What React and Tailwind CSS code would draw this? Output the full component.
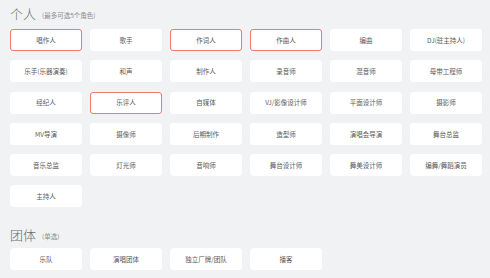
import React, { useState } from "react"

const ROLES = [
  "唱作人", "歌手", "作词人", "作曲人", "编曲", "DJ(驻主持人)",
  "乐手(乐器演奏)", "和声", "制作人", "录音师", "混音师", "母带工程师",
  "经纪人", "乐评人", "自媒体", "VJ/影像设计师", "平面设计师", "摄影师",
  "MV导演", "摄像师", "后期制作", "造型师", "演唱会导演", "舞台总监",
  "音乐总监", "灯光师", "音响师", "舞台设计师", "舞美设计师", "编舞/舞蹈演员",
  "主持人",
]

const GROUPS = ["乐队", "演唱团体", "独立厂牌/团队", "播客"]

const font = { fontFamily: '"Noto Sans CJK SC", "Noto Sans", sans-serif' }

function Chip({ label, active, onClick }) {
  return (
    <button
      onClick={onClick}
      className={`h-[22px] rounded-[3px] bg-white text-[6.5px] text-[#5a5a5a] leading-none flex items-center justify-center border ${active ? "border-[#f07a6b]" : "border-white"}`}
    >
      {label}
    </button>
  )
}

export default function App() {
  const [roles, setRoles] = useState(["唱作人", "作词人", "作曲人", "乐评人"])
  const [group, setGroup] = useState(null)

  const toggle = (r) => {
    if (roles.includes(r)) setRoles(roles.filter(x => x !== r))
    else if (roles.length < 5) setRoles([...roles, r])
  }

  return (
    <div className="min-h-screen bg-[#f1f2f4] pl-[10px] pr-[8px] pt-[7px]" style={font}>
      <div className="flex items-end gap-[6px] h-[13px] mb-[9px]">
        <span className="text-[13px] leading-none text-[#6a6a6a] font-light">个人</span>
        <span className="text-[6.5px] leading-none text-[#8a8a8a] mb-[2px]">(最多可选5个角色)</span>
      </div>
      <div className="grid grid-cols-6 gap-x-[8px] gap-y-[9.3px]">
        {ROLES.map(r => (
          <Chip key={r} label={r} active={roles.includes(r)} onClick={() => toggle(r)} />
        ))}
      </div>

      <div className="flex items-end gap-[6px] h-[13px] mt-[21px] mb-[7px]">
        <span className="text-[13px] leading-none text-[#6a6a6a] font-light">团体</span>
        <span className="text-[6.5px] leading-none text-[#8a8a8a] mb-[2px]">(单选)</span>
      </div>
      <div className="grid grid-cols-6 gap-x-[8px]">
        {GROUPS.map(g => (
          <Chip key={g} label={g} active={group === g} onClick={() => setGroup(group === g ? null : g)} />
        ))}
      </div>
    </div>
  )
}
